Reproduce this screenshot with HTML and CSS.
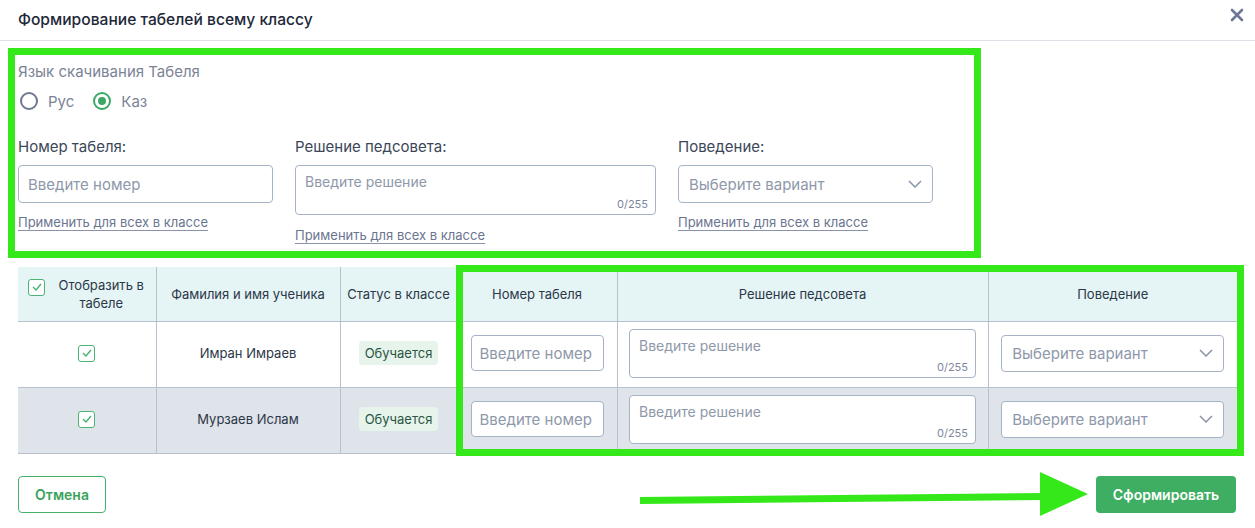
FILE: index.html
```html
<!DOCTYPE html>
<html lang="ru">
<head>
<meta charset="utf-8">
<title>Формирование табелей всему классу</title>
<link rel="stylesheet" href="styles.css">
</head>
<body>
<div class="modal">
  <div class="modal-header">
    <h1 class="modal-title">Формирование табелей всему классу</h1>
    <button class="close-btn" aria-label="Закрыть">
      <svg width="14" height="14" viewBox="0 0 14 14"><path d="M2 2 L12 12 M12 2 L2 12" stroke="#6d7695" stroke-width="2.6" stroke-linecap="round"/></svg>
    </button>
  </div>

  <div class="settings">
    <div class="lang-label">Язык скачивания Табеля</div>
    <div class="radios">
      <label class="radio"><span class="radio-circle"></span>Рус</label>
      <label class="radio"><span class="radio-circle checked"></span>Каз</label>
    </div>
    <div class="fields">
      <div class="field field-num">
        <div class="field-label">Номер табеля:</div>
        <div class="input">Введите номер</div>
        <a class="apply-link">Применить для всех в классе</a>
      </div>
      <div class="field field-text">
        <div class="field-label">Решение педсовета:</div>
        <div class="textarea"><span>Введите решение</span><span class="counter">0/255</span></div>
        <a class="apply-link link-lower">Применить для всех в классе</a>
      </div>
      <div class="field field-sel">
        <div class="field-label">Поведение:</div>
        <div class="select"><span>Выберите вариант</span>
          <svg width="14" height="8" viewBox="0 0 14 8"><path d="M1 1 L7 7 L13 1" fill="none" stroke="#8a94a8" stroke-width="1.5"/></svg>
        </div>
        <a class="apply-link">Применить для всех в классе</a>
      </div>
    </div>
  </div>

  <table class="grid">
    <colgroup>
      <col class="c1"><col class="c2"><col class="c3"><col class="c4"><col class="c5"><col class="c6">
    </colgroup>
    <thead>
      <tr>
        <th class="th-check"><div class="th-check-inner"><span class="cbox"><svg width="10" height="8" viewBox="0 0 10 8"><path d="M1 4 L4 7 L9 1" fill="none" stroke="#43b06b" stroke-width="1.3"/></svg></span><span class="th-check-text">Отобразить в табеле</span></div></th>
        <th>Фамилия и имя ученика</th>
        <th>Статус в классе</th>
        <th>Номер табеля</th>
        <th>Решение педсовета</th>
        <th>Поведение</th>
      </tr>
    </thead>
    <tbody>
      <tr>
        <td><span class="cbox"><svg width="10" height="8" viewBox="0 0 10 8"><path d="M1 4 L4 7 L9 1" fill="none" stroke="#43b06b" stroke-width="1.3"/></svg></span></td>
        <td>Имран Имраев</td>
        <td><span class="badge">Обучается</span></td>
        <td><div class="input input-sm">Введите номер</div></td>
        <td><div class="textarea textarea-sm"><span>Введите решение</span><span class="counter">0/255</span></div></td>
        <td><div class="select select-sm"><span>Выберите вариант</span><svg width="14" height="8" viewBox="0 0 14 8"><path d="M1 1 L7 7 L13 1" fill="none" stroke="#8a94a8" stroke-width="1.5"/></svg></div></td>
      </tr>
      <tr class="alt">
        <td><span class="cbox"><svg width="10" height="8" viewBox="0 0 10 8"><path d="M1 4 L4 7 L9 1" fill="none" stroke="#43b06b" stroke-width="1.3"/></svg></span></td>
        <td>Мурзаев Ислам</td>
        <td><span class="badge">Обучается</span></td>
        <td><div class="input input-sm">Введите номер</div></td>
        <td><div class="textarea textarea-sm"><span>Введите решение</span><span class="counter">0/255</span></div></td>
        <td><div class="select select-sm"><span>Выберите вариант</span><svg width="14" height="8" viewBox="0 0 14 8"><path d="M1 1 L7 7 L13 1" fill="none" stroke="#8a94a8" stroke-width="1.5"/></svg></div></td>
      </tr>
    </tbody>
  </table>

  <div class="footer">
    <button class="btn btn-outline">Отмена</button>
    <button class="btn btn-primary">Сформировать</button>
  </div>

  <div class="mark mark-top"></div>
  <div class="mark mark-table"></div>
  <svg class="mark-arrow" width="460" height="50" viewBox="0 0 460 50">
    <path d="M0 25 L405 21 L405 28 L0 32 Z" fill="#35e81a"/>
    <path d="M400 0 L448 22 L400 44 Z" fill="#35e81a"/>
  </svg>
</div>
</body>
</html>
```

FILE: styles.css
```css
* { box-sizing: border-box; }
html, body { margin: 0; padding: 0; background: #fff; }
body {
  font-family: "Inter", "Noto Sans", sans-serif;
  color: #2f3a4a;
  width: 1255px;
  height: 528px;
  overflow: hidden;
}
.modal { position: relative; width: 1255px; height: 528px; }

.modal-header {
  height: 41px;
  border-bottom: 1px solid #dde0e6;
  display: flex;
  align-items: center;
  justify-content: space-between;
  padding: 0 11px 2px 18px;
}
.modal-title {
  margin: 0;
  font-size: 15.6px;
  font-weight: 500;
  color: #1e2838;
}
.close-btn {
  border: 0; background: none; padding: 0; width: 14px; height: 14px;
  display: flex; margin-bottom: 8px;
}

.settings { padding: 21px 18px 0; }
.lang-label { font-size: 15px; line-height: 20px; color: #7b8396; }
.radios { display: flex; gap: 19px; margin-top: 9px; margin-left: 2px; height: 20px; align-items: center; }
.radio { display: flex; align-items: center; gap: 10px; font-size: 15px; color: #7b8396; }
.radio-circle {
  width: 18px; height: 18px; border-radius: 50%;
  border: 2px solid #6f7891; display: inline-block; position: relative;
}
.radio-circle.checked { border-color: #3da865; }
.radio-circle.checked::after {
  content: ""; position: absolute; left: 3px; top: 3px;
  width: 8px; height: 8px; border-radius: 50%; background: #3da865;
}

.fields { display: flex; gap: 22px; margin-top: 26px; align-items: flex-start; }
.field { display: flex; flex-direction: column; align-items: flex-start; }
.field-num, .field-sel { width: 255px; }
.field-text { width: 361px; }
.field-label { font-size: 15px; line-height: 20px; color: #3b4759; margin-bottom: 8px; }

.input, .select, .textarea {
  border: 1px solid #a5b3c7;
  border-radius: 4px;
  background: #fff;
  color: #8e98aa;
  font-size: 15px;
}
.input { width: 100%; height: 38px; display: flex; align-items: center; padding: 0 9px; }
.select { width: 100%; height: 38px; display: flex; align-items: center; justify-content: space-between; padding: 0 10px 0 10px; }
.textarea {
  width: 100%; height: 50px; padding: 7px 9px 0; position: relative;
  font-size: 14px; line-height: 17px;
}
.counter {
  position: absolute; right: 7px; bottom: 3px;
  font-size: 11px; line-height: 13px; color: #7d879a;
}
.apply-link {
  margin-top: 10px;
  font-size: 13px; line-height: 18px;
  color: #6b7590;
  text-decoration: underline;
  text-decoration-color: #8a93ab;
  text-underline-offset: 3px;
}
.link-lower { margin-top: 11px; }

.grid {
  margin: 23px 18px 0;
  width: 1219px;
  border-collapse: collapse;
  table-layout: fixed;
}
.c1 { width: 138px; } .c2 { width: 184px; } .c3 { width: 117px; }
.c4 { width: 160px; } .c5 { width: 371px; } .c6 { width: 249px; }
.grid th {
  background: #e5f4f5;
  height: 54px;
  font-size: 13px; font-weight: 400; line-height: 18px;
  color: #2c3748;
  text-align: center;
  border-left: 1px solid #b9c0cd;
  border-bottom: 1px solid #b9c0cd;
  padding: 0 4px;
}
.grid th:first-child, .grid td:first-child { border-left: 0; }
.th-check-inner { display: flex; align-items: flex-start; padding-left: 6px; }
.th-check-inner .cbox { margin-top: 3px; flex: none; }
.th-check-text { flex: 1; text-align: center; padding-left: 8px; padding-right: 2px; }
.grid td {
  height: 66px;
  font-size: 13px;
  color: #2c3748;
  text-align: center;
  border-left: 1px solid #b9c0cd;
  border-bottom: 1px solid #b9c0cd;
  padding: 0 0 2px;
}
.grid tr.alt td { background: #dfe3ea; }
.cbox {
  display: inline-flex; align-items: center; justify-content: center;
  width: 17px; height: 17px;
  border: 1.5px solid #4cb374; border-radius: 3px;
  background: #fff;
  vertical-align: middle;
}
.badge {
  display: inline-block;
  background: #e6f4eb;
  color: #2b5443;
  font-size: 13px;
  line-height: 24px;
  padding: 0 6px;
  border-radius: 4px;
}
.input-sm { width: 133px; height: 36px; margin: 0 auto; font-size: 15px; padding: 0 8px; }
.textarea-sm { width: 347px; height: 49px; margin: 0 auto; text-align: left; }
.select-sm { width: 223px; height: 37px; margin: 0 auto; }

.footer {
  display: flex; justify-content: space-between;
  padding: 22px 19px 0 18px;
}
.btn {
  height: 37px; border-radius: 4px;
  font-family: inherit; font-size: 14px; font-weight: 600;
}
.btn-outline {
  width: 88px; background: #fff; color: #3aa45c;
  border: 1.5px solid #46b168;
}
.btn-primary {
  width: 140px; background: #3eae62; color: #fff; border: 0;
}

.mark { position: absolute; border: 7px solid #35e81a; pointer-events: none; }
.mark-top { left: 8px; top: 48px; width: 973px; height: 210px; }
.mark-table { left: 456px; top: 265px; width: 788px; height: 191px; }
.mark-arrow { position: absolute; left: 640px; top: 472px; }
```
